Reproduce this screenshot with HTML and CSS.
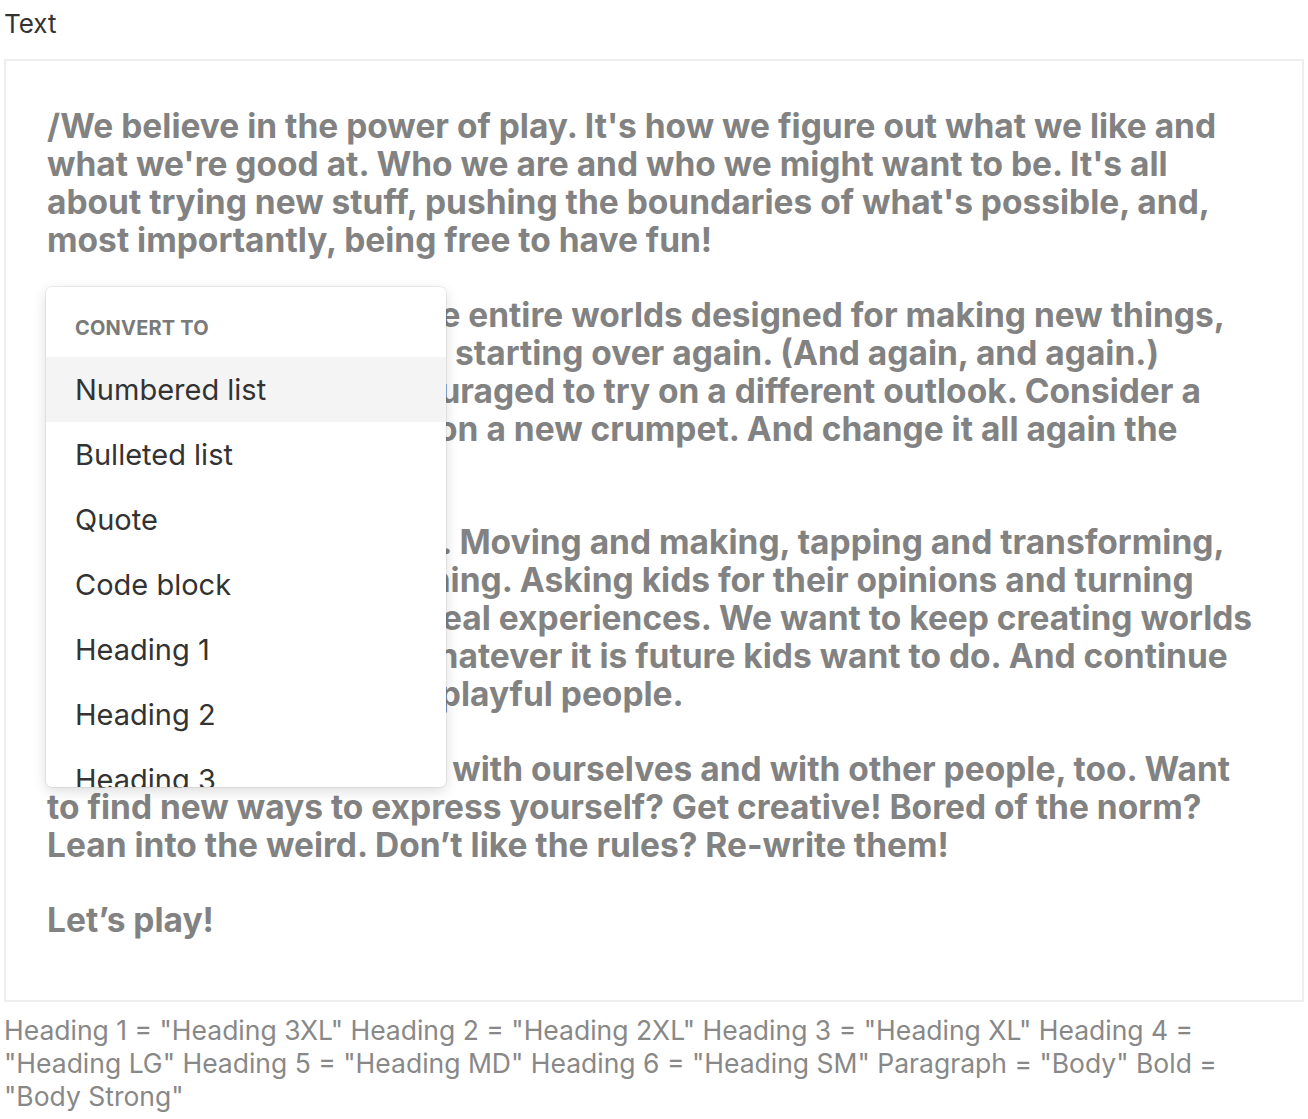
FILE: index.html
```html
<!DOCTYPE html>
<html lang="en">
<head>
<meta charset="utf-8">
<title>Text</title>
<link rel="stylesheet" href="styles.css">
</head>
<body>
<div class="label">Text</div>
<div class="editor">
  <div class="content">
    <p>/We believe in the power of play. It's how we figure out what we like and<br>what we're good at. Who we are and who we might want to be. It's all<br>about trying new stuff, pushing the boundaries of what's possible, and,<br>most importantly, being free to have fun!</p>
    <p>Our toys and games have entire worlds designed for making new things,<br>breaking them apart and starting over again. (And again, and again.)<br>Where all of us are encouraged to try on a different outlook. Consider a<br>new hat. Take a big bite on a new crumpet. And change it all again the<br>next day.</p>
    <p>We believe in play for all. Moving and making, tapping and transforming,<br>Building up and reimagining. Asking kids for their opinions and turning<br>their biggest ideas into real experiences. We want to keep creating worlds<br>that all make room for whatever it is future kids want to do. And continue<br>to inspire more creative playful people.</p>
    <p>Play helps us to connect with ourselves and with other people, too. Want<br>to find new ways to express yourself? Get creative! Bored of the norm?<br>Lean into the weird. Don’t like the rules? Re-write them!</p>
    <p>Let’s play!</p>
  </div>
  <div class="menu">
    <div class="menu-title">Convert to</div>
    <div class="menu-item active">Numbered list</div>
    <div class="menu-item">Bulleted list</div>
    <div class="menu-item">Quote</div>
    <div class="menu-item">Code block</div>
    <div class="menu-item">Heading 1</div>
    <div class="menu-item">Heading 2</div>
    <div class="menu-item">Heading 3</div>
    <div class="menu-item">Heading 4</div>
  </div>
</div>
<div class="note">Heading 1 = "Heading 3XL" Heading 2 = "Heading 2XL" Heading 3 = "Heading XL" Heading 4 = "Heading LG" Heading 5 = "Heading MD" Heading 6 = "Heading SM" Paragraph = "Body" Bold = "Body Strong"</div>
</body>
</html>
```
FILE: styles.css
```css
html, body {
  margin: 0;
  padding: 0;
  background: #fff;
}
body {
  padding: 0 4px;
  font-family: Inter, "Noto Sans", sans-serif;
}
.label {
  font-size: 26px;
  line-height: 32px;
  color: #333;
  padding-top: 8px;
  margin-bottom: 19px;
}
.editor {
  position: relative;
  border: 2px solid #eee;
  padding: 46px 10px 61px 41px;
}
.content p {
  margin: 0 0 37px 0;
  font-size: 33.5px;
  line-height: 38px;
  font-weight: 700;
  letter-spacing: 0;
  color: #828282;
  white-space: nowrap;
}
.content p:last-child {
  margin-bottom: 0;
}
.menu {
  position: absolute;
  left: 40px;
  top: 226px;
  width: 400px;
  height: 500px;
  overflow: hidden;
  background: #fff;
  border-radius: 6px;
  box-shadow: 0 0 0 1px rgba(0,0,0,0.06), 0 4px 14px rgba(0,0,0,0.14);
}
.menu-title {
  padding: 28px 29px 16px;
  font-size: 20px;
  line-height: 26px;
  font-weight: 700;
  letter-spacing: 0.01em;
  text-transform: uppercase;
  color: #7a7a7a;
}
.menu-item {
  height: 65px;
  line-height: 65px;
  padding: 0 29px;
  font-size: 29px;
  color: #333;
}
.menu-item.active {
  background: #f4f4f4;
}
.note {
  margin-top: 12px;
  padding-right: 60px;
  font-size: 26.5px;
  line-height: 33px;
  color: #888;
}
```
